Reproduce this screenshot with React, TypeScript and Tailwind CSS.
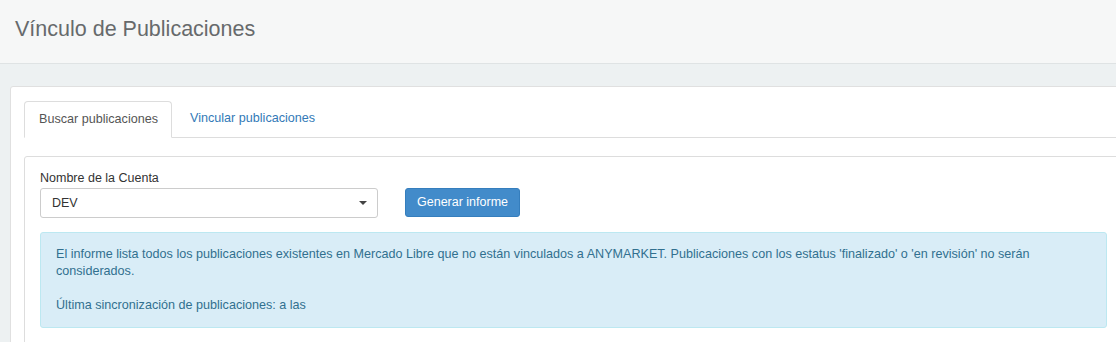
export default function App() {
  return (
    <div className="w-full h-[342px] overflow-hidden bg-[#edf1f2] font-['Liberation_Sans',Arial,sans-serif]">
      <div className="w-[1150px]">
        {/* Page header */}
        <header className="h-[64px] bg-[#f6f7f7] border-b border-[#dfe3e4] px-[15px] pt-[15px]">
          <h1 className="text-[21.5px] leading-[28px] text-[#676a6c]">Vínculo de Publicaciones</h1>
        </header>

        {/* Main panel */}
        <div className="mt-[22px] ml-[10px] w-[1128px] bg-white border border-[#e0e0e0] rounded-[3px] px-[13px] pt-[14px] pb-[30px]">
          {/* Tabs */}
          <ul className="flex border-b border-[#dddddd] text-[12.6px] leading-[17px]">
            <li className="-mb-px pl-[14px] pr-[13px] py-[9px] bg-white border border-[#dddddd] border-b-white rounded-t-[4px] text-[#555555]">
              Buscar publicaciones
            </li>
            <li className="ml-[2px] px-[16px] py-[9px] text-[#337ab7]">Vincular publicaciones</li>
          </ul>

          {/* Tab content */}
          <div className="mt-[18px] border border-[#dddddd] rounded-[3px] px-[15px] pt-[14px] pb-[16px]">
            <div className="flex items-end gap-[27px]">
              <div className="flex flex-col">
                <label className="text-[12.5px] leading-[15px] text-[#333333] mb-[2px]">Nombre de la Cuenta</label>
                <div className="w-[338px] h-[30px] border border-[#cccccc] rounded-[3px] flex items-center justify-between pl-[11px] pr-[10px] text-[12.5px] text-[#333333]">
                  <span>DEV</span>
                  <span className="w-0 h-0 border-l-[4px] border-r-[4px] border-t-[4px] border-l-transparent border-r-transparent border-t-[#444444]" />
                </div>
              </div>
              <button className="mb-[1px] h-[29px] px-[11px] bg-[#428bca] border border-[#357ebd] rounded-[3px] text-white text-[12.5px]">
                Generar informe
              </button>
            </div>

            <div className="mt-[14px] w-[1067px] bg-[#d9edf7] border border-[#bce8f1] rounded-[3px] px-[15px] py-[13px] text-[12.6px] leading-[17px] text-[#31708f]">
              El informe lista todos los publicaciones existentes en Mercado Libre que no están vinculados a ANYMARKET. Publicaciones con los estatus 'finalizado' o 'en revisión' no serán considerados.
              <br />
              <br />
              Última sincronización de publicaciones: a las
            </div>
          </div>
        </div>
      </div>
    </div>
  );
}
